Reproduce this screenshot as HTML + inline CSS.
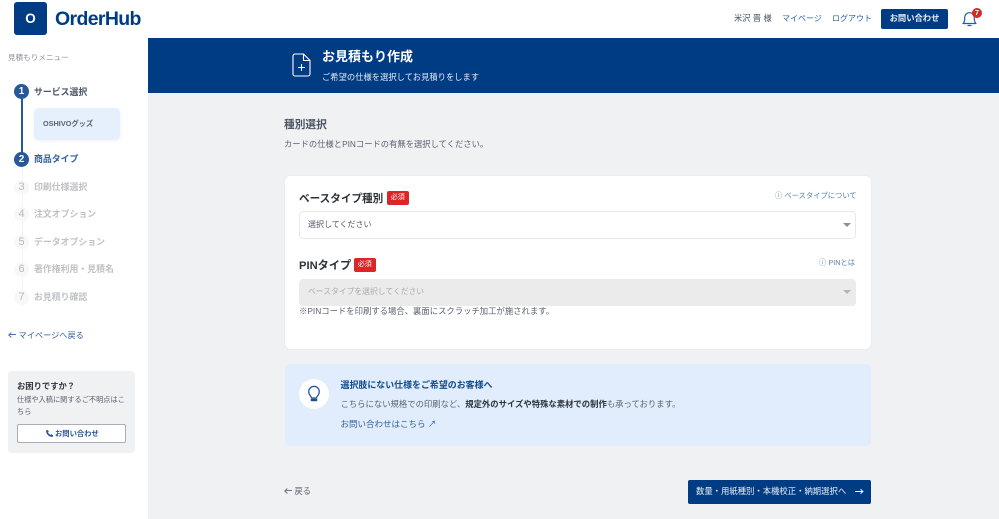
<!DOCTYPE html>
<html lang="ja"><head><meta charset="utf-8"><title>OrderHub</title>
<style>
*{box-sizing:border-box;margin:0;padding:0}
html,body{width:999px;height:519px;overflow:hidden;background:#f0f1f3}
body{position:relative;font-family:"Liberation Sans","Noto Sans CJK JP",sans-serif;color:#4b5563}
.a{position:absolute;white-space:nowrap}
.b{font-weight:700}
.s{width:15px;height:15px;border-radius:50%;left:14px;text-align:center;font:700 10px/15px "Liberation Sans",sans-serif}
.on{background:#27589a;color:#fff}
.off{color:#b4b8bf;font-weight:400;font-size:11px;line-height:15px;background:#f8f8f9;left:14px}
.st{left:34px;font-size:8.9px;line-height:14px;color:#b4b7bd;font-weight:700;opacity:.85}
.req{background:#dc2626;color:#fff;font-size:7px;line-height:14px;height:14px;width:21.5px;text-align:center;border-radius:2px}
.lbl{line-height:16px;font-weight:700;color:#2d333b}
.hlp{font-size:7.3px;line-height:10px;color:#5b7fb0}
.sel{left:299px;width:557px;height:27.5px;border-radius:4px}
.tri{width:0;height:0;border-left:4px solid transparent;border-right:4px solid transparent;border-top:4.5px solid #8a8f98}
.ar{display:inline-block;width:7px;height:1px;background:currentColor;position:relative;vertical-align:middle;margin:0 3px 0 1px;top:-1px;opacity:.85}
.ar:before{content:"";position:absolute;left:0;top:-1.5px;width:3px;height:3px;border-left:1px solid currentColor;border-bottom:1px solid currentColor;transform:rotate(45deg)}
</style></head><body>

<div class="a" style="left:0;top:0;width:999px;height:38px;background:#fff"></div>
<div class="a" style="left:0;top:38px;width:147.5px;height:481px;background:#fff"></div>
<div class="a" style="left:147.5px;top:38px;width:851.5px;height:55px;background:#003c83"></div>

<div class="a" style="left:14px;top:2px;width:33px;height:33px;border-radius:3px;background:#003c83;color:#fff;text-align:center;font:700 13.5px/33px 'Liberation Sans',sans-serif">O</div>
<div class="a b" style="left:55px;top:6px;font-size:19.5px;line-height:26px;color:#003c83;letter-spacing:-.65px">OrderHub</div>

<div class="a" style="left:734px;top:12px;font-size:8.3px;line-height:13px;color:#4b5563">米沢 晋 様</div>
<div class="a" style="left:782px;top:12px;font-size:8px;line-height:13px;color:#2f5f9f">マイページ</div>
<div class="a" style="left:832px;top:12px;font-size:8px;line-height:13px;color:#2f5f9f">ログアウト</div>
<div class="a b" style="left:881px;top:9px;width:67px;height:20px;border-radius:2px;background:#003c83;color:#e8eef6;text-align:center;font-size:8.3px;line-height:19px">お問い合わせ</div>
<svg class="a" style="left:961px;top:10px" width="17" height="17" viewBox="0 0 17 17" fill="none" stroke="#1f5ea8" stroke-width="1.2" stroke-linecap="round" stroke-linejoin="round"><path d="M2 13.5c1-1 1.700-2 1.700-4.500V7.500a4.800 4.800 0 0 1 9.600 0V9c0 2.500.7 3.500 1.700 4.500z"/><path d="M7 15.500h3"/></svg>
<div class="a" style="left:972px;top:8px;width:10px;height:10px;border-radius:50%;background:#dc2626;color:#fff;text-align:center;font:700 7.500px/10px 'Liberation Sans',sans-serif">7</div>

<div class="a" style="left:8px;top:52px;font-size:7.6px;line-height:12px;color:#8b9098">見積もりメニュー</div>
<div class="a" style="left:21px;top:95px;width:2px;height:62px;background:#27589a"></div>
<div class="a" style="left:22px;top:165px;width:1px;height:130px;background:#f5f5f6"></div>

<div class="a s on" style="top:84px">1</div>
<div class="a b" style="left:34px;top:85px;font-size:8.9px;line-height:14px;color:#4b5563">サービス選択</div>
<div class="a" style="left:34px;top:107.500px;width:86px;height:32px;border-radius:5px;background:#e6f0fd;box-shadow:0 1px 3px rgba(40,80,140,.08)"></div>
<div class="a b" style="left:43px;top:118px;font-size:7.300px;line-height:11px;color:#5a6470">OSHIVOグッズ</div>
<div class="a s on" style="top:152px">2</div>
<div class="a b" style="left:34px;top:152px;font-size:8.900px;line-height:14px;color:#2f5f9f">商品タイプ</div>

<div class="a s off" style="top:180px">3</div><div class="a st" style="top:180px">印刷仕様選択</div>
<div class="a s off" style="top:207px">4</div><div class="a st" style="top:207px">注文オプション</div>
<div class="a s off" style="top:235px">5</div><div class="a st" style="top:235px">データオプション</div>
<div class="a s off" style="top:262px">6</div><div class="a st" style="top:262px">著作権利用・見積名</div>
<div class="a s off" style="top:290px">7</div><div class="a st" style="top:290px">お見積り確認</div>

<div class="a" style="left:7.500px;top:329px;font-size:8.200px;line-height:13px;color:#2f5f9f"><span class="ar"></span>マイページへ戻る</div>

<div class="a" style="left:8px;top:371px;width:127px;height:82px;border-radius:4px;background:#f0f1f3"></div>
<div class="a b" style="left:17px;top:380px;font-size:8.300px;line-height:13px;color:#2d333b">お困りですか？</div>
<div class="a" style="left:17px;top:394px;width:110px;white-space:normal;font-size:7.200px;line-height:12px;color:#5b6270">仕様や入稿に関するご不明点はこちら</div>
<div class="a" style="left:17px;top:424px;width:109px;height:19px;border-radius:2px;background:#fff;border:1px solid #a9adb5"></div>
<svg class="a" style="left:44.500px;top:429px" width="9" height="9" viewBox="0 0 24 24" fill="#27589a"><path d="M6.600 2l3.600 4.600-2 2.800c1.200 2.700 3.500 5 6.300 6.300l2.800-2 4.700 3.600-2.200 3.900C11 22 2.500 13 2.700 4.400z"/></svg>
<div class="a b" style="left:55px;top:427px;font-size:7.300px;line-height:13px;color:#27589a">お問い合わせ</div>

<svg class="a" style="left:292px;top:53px" width="19" height="24" viewBox="0 0 19 24" fill="none" stroke="#fff" stroke-width="1.100" stroke-linecap="round" stroke-linejoin="round"><path d="M3 1h8.500L18 7.500V21a2 2 0 0 1-2 2H3a2 2 0 0 1-2-2V3a2 2 0 0 1 2-2z"/><path d="M11.500 1v6.500H18"/><path d="M9.500 11.500v6M6.500 14.500h6"/></svg>
<div class="a b" style="left:322px;top:47px;font-size:13px;line-height:19px;color:#fff">お見積もり作成</div>
<div class="a" style="left:322px;top:71px;font-size:8.300px;line-height:13px;color:#e3ebf5">ご希望の仕様を選択してお見積りをします</div>

<div class="a b" style="left:284px;top:118px;font-size:10.700px;line-height:15px;color:#4b5563">種別選択</div>
<div class="a" style="left:284px;top:138px;font-size:8.300px;line-height:13px;color:#5b6270">カードの仕様とPINコードの有無を選択してください。</div>

<div class="a" style="left:284.500px;top:176px;width:586px;height:173px;border-radius:5px;background:#fff;box-shadow:0 0 1px rgba(0,0,0,.12)"></div>
<div class="a lbl" style="left:299px;top:191px;font-size:10.600px">ベースタイプ種別</div>
<div class="a req" style="left:387px;top:191px">必須</div>
<div class="a hlp" style="left:775px;top:191px">ⓘ ベースタイプについて</div>
<div class="a sel" style="top:211px;background:#fff;border:1px solid #e8e9ec"></div>
<div class="a" style="left:308px;top:218px;font-size:8px;line-height:13px;color:#4b5563">選択してください</div>
<div class="a tri" style="left:843px;top:223px"></div>

<div class="a lbl" style="left:299px;top:258px;font-size:11.200px">PINタイプ</div>
<div class="a req" style="left:354px;top:258px">必須</div>
<div class="a hlp" style="left:819px;top:258px">ⓘ PINとは</div>
<div class="a sel" style="top:278.500px;background:#ebebec"></div>
<div class="a" style="left:308px;top:285px;font-size:7.800px;line-height:13px;color:#a8abb0">ベースタイプを選択してください</div>
<div class="a tri" style="left:843px;top:290px;border-top-color:#b3b5ba"></div>
<div class="a" style="left:299px;top:305px;font-size:8.350px;line-height:13px;color:#5b6270">※PINコードを印刷する場合、裏面にスクラッチ加工が施されます。</div>

<div class="a" style="left:284.500px;top:364px;width:586px;height:82px;border-radius:5px;background:#e1edfc"></div>
<div class="a" style="left:299px;top:379px;width:30px;height:30px;border-radius:50%;background:#fff"></div>
<svg class="a" style="left:306px;top:385px" width="16" height="18" viewBox="0 0 16 18" fill="none" stroke="#1f4f91" stroke-width="1.200" stroke-linecap="round"><path d="M5.500 13c0-1.800-2.800-3-2.800-6.300a5.300 5.300 0 0 1 10.600 0C13.300 10 10.500 11.200 10.500 13z"/><path d="M5.800 15h4.400" stroke-width="2.400"/></svg>
<div class="a b" style="left:340.500px;top:379px;font-size:8.950px;line-height:13px;color:#0f4a8f">選択肢にない仕様をご希望のお客様へ</div>
<div class="a" style="left:340.500px;top:398px;font-size:8.350px;line-height:13px;color:#5b6270">こちらにない規格での印刷など、<b style="color:#2d333b">規定外のサイズや特殊な素材での制作</b>も承っております。</div>
<div class="a" style="left:340.500px;top:418px;font-size:8.500px;line-height:13px;color:#2f5f9f">お問い合わせはこちら ↗</div>

<div class="a" style="left:283.500px;top:485px;font-size:8.300px;line-height:13px;color:#5b6270"><span class="ar"></span>戻る</div>
<div class="a" style="left:688px;top:480px;width:183px;height:23.500px;border-radius:2px;background:#003c83"></div>
<div class="a" style="left:696px;top:485px;font-size:8.350px;line-height:13px;color:#e8eef6">数量・用紙種別・本機校正・納期選択へ</div>
<svg class="a" style="left:854px;top:487px" width="10" height="9" viewBox="0 0 10 9" fill="none" stroke="#fff" stroke-width=".9"><path d="M1 4.500h8M6.500 2.200L9 4.500 6.500 6.800"/></svg>
</body></html>
